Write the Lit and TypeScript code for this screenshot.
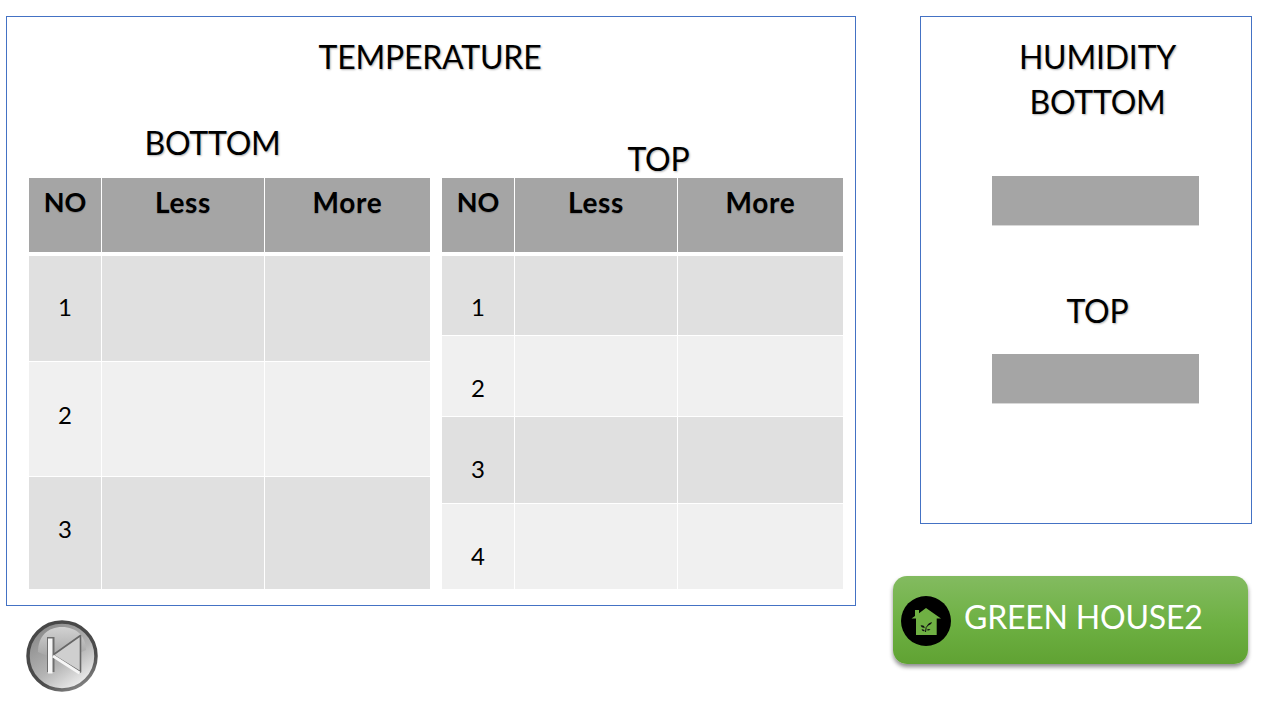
import { LitElement, html, css, svg } from "lit";
import { customElement } from "lit/decorators.js";

const houseIcon = svg`
  <circle cx="25" cy="25" r="25" fill="#000"/>
  <path d="M25 12 L40 22.5 L35.7 22.5 L35.7 39 L15 39 L15 22.5 L10.5 22.5 L14 20 L14 14 L18 14 L18 17.2 Z" fill="#6fb043"/>
  <path d="M19.5 29.5 q3 -1 4.5 2 q-3 1.2 -4.5 -2 Z M26 29.5 q1.5 -3 5 -3.5 q-.8 3.2 -5 3.5 Z M25.5 34 q2 -1.6 4 -.6 q-2 1.8 -4 .6 Z M20.5 33.5 q2.4 -.6 3.3 1.5 q-2.4 .8 -3.3 -1.5 Z" fill="#111"/>
  <path d="M24.5 36 q-.5 -5 3.5 -8" fill="none" stroke="#111" stroke-width="1"/>
`;

type Row = [number, number];

@customElement("data-table")
class DataTable extends LitElement {
  static properties = { rows: { type: Array } };
  rows: Row[] = [];
  static styles = css`
    :host { display: block; width: 401px; font-family: Lato, "Open Sans", sans-serif; color: #000; }
    .row { display: grid; grid-template-columns: 72px 163px 166px; }
    .cell { box-sizing: border-box; border-left: 1px solid #fff; display: flex; align-items: center; justify-content: center; font-size: 24px; }
    .cell:first-child { border-left: 0; }
    .head { height: 74px; margin-bottom: 4px; }
    .head .cell { background: #a5a5a5; font-weight: 700; font-size: 28px; align-items: flex-start; padding-top: 7px; letter-spacing: .7px; text-shadow: 0 1px 1px rgba(0,0,0,.2); }
    .head .cell:first-child { font-size: 27px; letter-spacing: 0; }
    .body { border-bottom: 1px solid #fff; box-sizing: border-box; }
    .odd .cell { background: #e0e0e0; }
    .even .cell { background: #f0f0f0; }
  `;
  render() {
    return html`
      <div class="row head">
        <div class="cell">NO</div><div class="cell">Less</div><div class="cell">More</div>
      </div>
      ${this.rows.map(([h, off], i) => html`
        <div class="row body ${i % 2 ? "even" : "odd"}" style="height:${h}px">
          <div class="cell" style="padding-${off < 0 ? "bottom" : "top"}:${Math.abs(off)}px">${i + 1}</div>
          <div class="cell"></div>
          <div class="cell"></div>
        </div>`)}
    `;
  }
}

@customElement("app-root")
class AppRoot extends LitElement {
  static styles = css`
    :host { display: block; width: 1280px; height: 720px; background: #fff; font-family: Lato, "Open Sans", sans-serif; color: #000; overflow: hidden; }
    .page { display: grid; grid-template-columns: 850px 392px; column-gap: 37px; padding: 16px 0 0 6px; box-sizing: border-box; height: 720px; }
    .panel { box-sizing: border-box; border: 1px solid #4472c4; background: #fff; }
    h2 { margin: 0; font-weight: 400; font-size: 32px; line-height: 44px; letter-spacing: -.2px; text-shadow: 1px 1px 2px rgba(0,0,0,.3); }
    .temp { height: 590px; padding: 18px 11px 0 22px; }
    .temp > h2 { text-align: center; margin-right: 13px; }
    .tables { display: grid; grid-template-columns: 401px 401px; column-gap: 12px; }
    .col { display: flex; flex-direction: column; justify-content: flex-end; height: 511px; }
    .lbl { text-align: center; }
    .lbl.b { margin: 0 34px 13px 0; }
    .lbl.t { margin: 0 -32px -3px 0; }
    .right { display: flex; flex-direction: column; align-items: flex-start; }
    .hum { width: 332px; height: 508px; margin-left: 27px; padding-top: 18px; display: flex; flex-direction: column; align-items: center; }
    .hum h2 { width: 332px; padding-left: 23px; box-sizing: border-box; text-align: center; }
    .hum h2.second { margin-top: 1px; }
    .box { width: 207px; height: 50px; background: #a5a5a5; margin-left: 19px; border-bottom: 1px solid #d8d8d8; box-sizing: border-box; }
    .b1 { margin-top: 52px; }
    .hum h2.top-h { margin-top: 63px; margin-bottom: 21px; }
    .green { margin-top: 52px; width: 355px; height: 88px; border-radius: 14px; background: linear-gradient(#83bb60, #6db042 55%, #60a233); box-shadow: 0 3px 4px rgba(0,0,0,.45); display: flex; align-items: center; padding-left: 8px; box-sizing: border-box; color: #fff; font-size: 32px; letter-spacing: -.2px; gap: 13px; }
    .green svg { width: 50px; height: 50px; flex: none; margin-top: 2px; }
    .green span { margin-top: -7px; }
    .back { display: block; width: 72px; height: 72px; margin: 14px 0 0 20px; }
  `;
  render() {
    return html`
      <div class="page">
        <div>
          <section class="panel temp">
            <h2>TEMPERATURE</h2>
            <div class="tables">
              <div class="col">
                <h2 class="lbl b">BOTTOM</h2>
                <data-table .rows=${[[106, -4], [115, -10], [113, -10]]}></data-table>
              </div>
              <div class="col">
                <h2 class="lbl t">TOP</h2>
                <data-table .rows=${[[80, 22], [81, 22], [87, 16], [86, 17]]}></data-table>
              </div>
            </div>
          </section>
          <svg class="back" viewBox="0 0 72 72">
            <defs>
              <linearGradient id="bg" x1="0.2" y1="0.1" x2="0.8" y2="0.95">
                <stop offset="0" stop-color="#8c8c8c"/><stop offset=".55" stop-color="#b4b4b4"/><stop offset="1" stop-color="#f2f2f2"/>
              </linearGradient>
              <linearGradient id="gl" x1="0" y1="0" x2="0" y2="1">
                <stop offset="0" stop-color="#d2d2d2"/><stop offset="1" stop-color="#a6a6a6"/>
              </linearGradient>
              <linearGradient id="ring" x1="0.2" y1="0" x2="0.8" y2="1">
                <stop offset="0" stop-color="#474747"/><stop offset=".7" stop-color="#4c4c4c"/><stop offset="1" stop-color="#8a8a8a"/>
              </linearGradient>
            </defs>
            <circle cx="36" cy="36" r="34" fill="url(#bg)" stroke="url(#ring)" stroke-width="3.5"/>
            <path d="M12 32 C12 16 22 7 36 7 C50 7 60 16 60 30 C48 36 26 40 12 32 Z" fill="url(#gl)"/>
            <rect x="21" y="17" width="7.5" height="35" fill="#6e6e6e"/>
            <path d="M27 35 L54.5 15.5 V52 Z" fill="#cfcfcf" stroke="#666" stroke-width="1.6" stroke-linejoin="round"/>
            <rect x="22" y="18.5" width="4.5" height="35" fill="#f6f6f6"/>
            <path d="M27 36 L53.5 53" stroke="#f6f6f6" stroke-width="3" fill="none"/>
          </svg>
        </div>
        <div class="right">
          <section class="panel hum">
            <h2>HUMIDITY</h2>
            <h2 class="second">BOTTOM</h2>
            <div class="box b1"></div>
            <h2 class="top-h">TOP</h2>
            <div class="box"></div>
          </section>
          <div class="green">
            <svg viewBox="0 0 50 50">${houseIcon}</svg>
            <span>GREEN HOUSE2</span>
          </div>
        </div>
      </div>
    `;
  }
}
